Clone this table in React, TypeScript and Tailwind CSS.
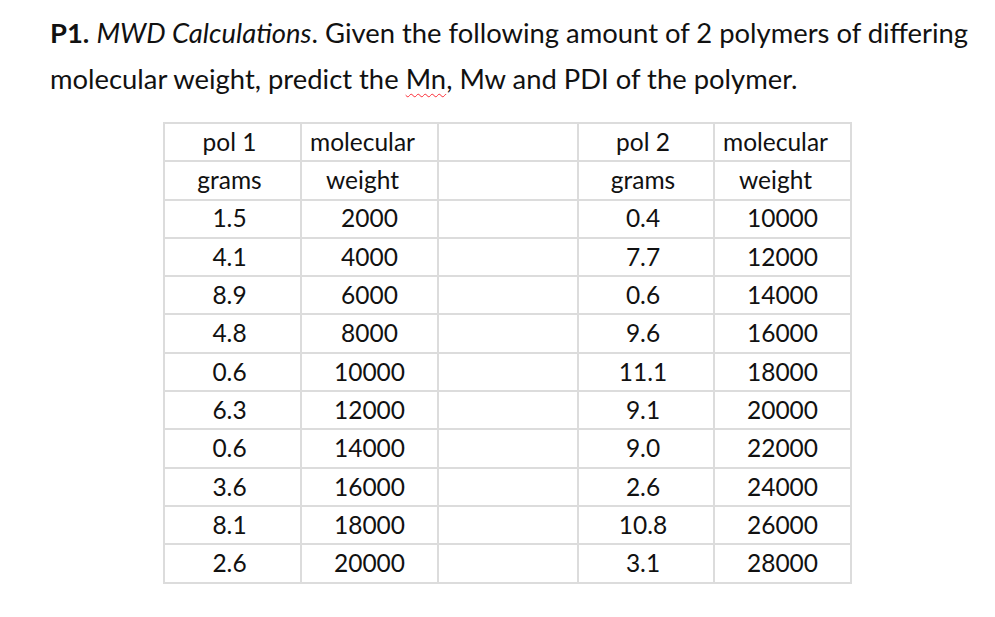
const rows: [string, string, string, string][] = [
  ['1.5', '2000', '0.4', '10000'],
  ['4.1', '4000', '7.7', '12000'],
  ['8.9', '6000', '0.6', '14000'],
  ['4.8', '8000', '9.6', '16000'],
  ['0.6', '10000', '11.1', '18000'],
  ['6.3', '12000', '9.1', '20000'],
  ['0.6', '14000', '9.0', '22000'],
  ['3.6', '16000', '2.6', '24000'],
  ['8.1', '18000', '10.8', '26000'],
  ['2.6', '20000', '3.1', '28000'],
];

const cell = 'border-2 border-[#dcdcdc] text-center align-middle p-0';

export default function App() {
  return (
    <div className="w-[995px] h-[617px] bg-white text-[#111] font-['Lato','Liberation_Sans',sans-serif] overflow-hidden">
      <div className="pl-[50px] pt-[10px] text-[27.4px] leading-[46px] whitespace-nowrap">
        <p>
          <b>P1.</b> <i>MWD Calculations</i>. Given the following amount of 2 polymers of differing
        </p>
        <p>
          molecular weight, predict the{' '}
          <span className="underline decoration-wavy decoration-red-500 decoration-1 underline-offset-4">Mn</span>, Mw
          and PDI of the polymer.
        </p>
      </div>

      <table className="ml-[163px] mt-[20px] border-collapse text-[24.5px] leading-none">
        <colgroup>
          <col className="w-[137px]" />
          <col className="w-[137px]" />
          <col className="w-[140px]" />
          <col className="w-[136px]" />
          <col className="w-[137px]" />
        </colgroup>
        <tbody>
          <tr className="h-[38.3px]">
            <td className={cell + ' pr-[6px]'}>pol 1</td>
            <td className={cell + ' pr-[14px]'}>molecular</td>
            <td className={cell}></td>
            <td className={cell + ' pr-[6px]'}>pol 2</td>
            <td className={cell + ' pr-[14px]'}>molecular</td>
          </tr>
          <tr className="h-[38.3px]">
            <td className={cell + ' pr-[6px]'}>grams</td>
            <td className={cell + ' pr-[14px]'}>weight</td>
            <td className={cell}></td>
            <td className={cell + ' pr-[6px]'}>grams</td>
            <td className={cell + ' pr-[14px]'}>weight</td>
          </tr>
          {rows.map((r, i) => (
            <tr key={i} className="h-[38.3px]">
              <td className={cell + ' pr-[6px]'}>{r[0]}</td>
              <td className={cell}>{r[1]}</td>
              <td className={cell}></td>
              <td className={cell + ' pr-[6px]'}>{r[2]}</td>
              <td className={cell}>{r[3]}</td>
            </tr>
          ))}
        </tbody>
      </table>
    </div>
  );
}
